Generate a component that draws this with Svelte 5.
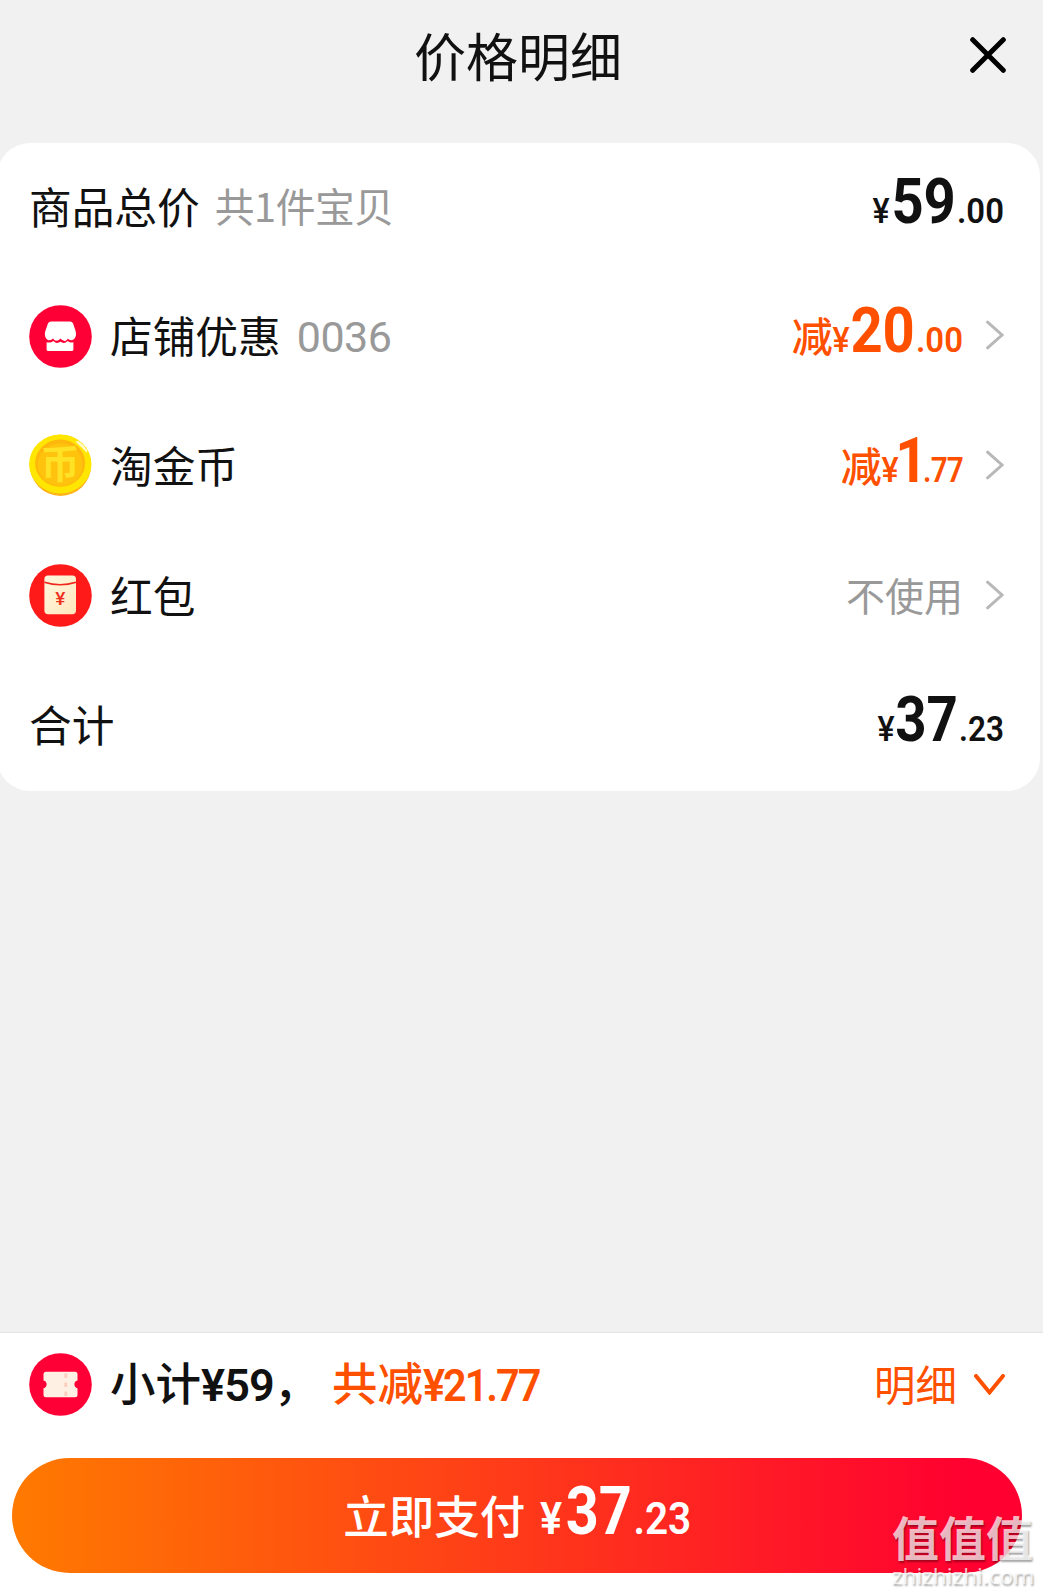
<script>
    const rows = [
        { id: 'total', label: '商品总价', note: '共1件宝贝', int: '59', dec: '.00' },
        { id: 'shop', icon: 'shop', label: '店铺优惠', note: '0036', minus: true, int: '20', dec: '.00', arrow: true },
        { id: 'coin', icon: 'coin', label: '淘金币', minus: true, int: '1', dec: '.77', arrow: true },
        { id: 'packet', icon: 'packet', label: '红包', text: '不使用', arrow: true },
        { id: 'sum', label: '合计', int: '37', dec: '.23' }
    ];
</script>

<div class="page">
    <header>
        <h1>价格明细</h1>
        <button class="close" aria-label="关闭">
            <svg width="36" height="36" viewBox="0 0 36 36">
                <path d="M2.7 2.7 L33.3 33.3 M33.3 2.7 L2.7 33.3" />
            </svg>
        </button>
    </header>

    <section class="card">
        {#each rows as row (row.id)}
            <div class="row {row.id}">
                {#if row.icon}
                    <svg class="icon" viewBox="0 0 63 63">
                        {#if row.icon === 'shop'}
                            <circle cx="31.5" cy="31.5" r="31.3" fill="#ff0036" />
                            <path fill="#fff" d="M22 16.4 H41 Q43 16.4 44 18.2 L46.6 26 Q48 32 44.5 34.5 Q41.5 36.3 38.8 33.8 Q37 37 34.5 35.4 Q32.5 35 31.5 33.6 Q29.5 36 27.5 35.6 Q25.5 36 24 33.6 Q21.5 36.3 18.5 34.8 Q14.8 32 16.2 26.5 L19 18.2 Q20 16.4 22 16.4 Z" />
                            <path fill="#fff" d="M17.6 37.2 Q21.5 38.4 24.4 36 Q27.5 39.4 31.5 36.8 Q35.5 39.4 38.6 36 Q41.5 38.4 44.4 37.2 V44.4 Q44.4 46 42.8 46 H19.2 Q17.6 46 17.6 44.4 Z" />
                        {:else if row.icon === 'coin'}
                            <circle cx="31.5" cy="31.3" r="30.6" fill="#ffb31a" />
                            <ellipse cx="31.3" cy="30" rx="31.2" ry="29.4" fill="#ffe600" />
                            <ellipse cx="31.1" cy="29.1" rx="25" ry="23.6" fill="#ffb70d" />
                            <ellipse cx="31.2" cy="30.6" rx="22.6" ry="21.4" fill="#ffc20d" />
                            <path d="M46.5 7.5 L57.5 18.5 L58.6 16.8 Q55 10.5 49.5 7 Z" fill="#fff9c8" />
                            <text class="coin-glyph" x="31.2" y="43.6">币</text>
                        {:else}
                            <circle cx="31.5" cy="31.5" r="31.3" fill="#ff1a1a" />
                            <defs>
                                <linearGradient id="paper" x1="0" y1="0" x2="1" y2="1">
                                    <stop offset="0" stop-color="#fff8df" />
                                    <stop offset="1" stop-color="#ffe7bd" />
                                </linearGradient>
                            </defs>
                            <rect x="15.4" y="11.6" width="31.6" height="38.6" rx="3.6" fill="url(#paper)" />
                            <path d="M15.4 18.2 Q31.2 23.2 47 18.2" fill="none" stroke="#f3261c" stroke-width="1.6" />
                            <text class="packet-glyph" x="31.2" y="41.3">¥</text>
                        {/if}
                    </svg>
                {/if}
                <span class="label">{row.label}</span>
                {#if row.note}<span class="note">{row.note}</span>{/if}
                <span class="value">
                    {#if row.text}
                        <span class="unused">{row.text}</span>
                    {:else}
                        <span class="price" class:off={row.minus}>
                            {#if row.minus}<span class="minus">减</span>{/if}<span class="yen">¥</span><span class="int">{row.int}</span><span class="dec">{row.dec}</span>
                        </span>
                    {/if}
                    {#if row.arrow}
                        <svg class="arrow" width="18" height="30" viewBox="0 0 18 30">
                            <path d="M1.6 2.2 L16 15 L1.6 27.8" />
                        </svg>
                    {/if}
                </span>
            </div>
        {/each}
    </section>

    <footer>
        <div class="summary">
            <svg class="icon" viewBox="0 0 63 63">
                <circle cx="31.5" cy="31.5" r="31.3" fill="#ff0036" />
                <path fill="#fff0e4" d="M17 18.7 H46 Q48.5 18.7 48.5 21.2 V27.4 A4 4 0 0 0 48.5 35.2 V41.8 Q48.5 44.3 46 44.3 H17 Q14.5 44.3 14.5 41.8 V35.2 A4 4 0 0 0 14.5 27.4 V21.2 Q14.5 18.7 17 18.7 Z" />
                <path d="M36.8 20.5 V43.5" stroke="#ffcdbd" stroke-width="2.8" stroke-dasharray="4.6 4.4" />
            </svg>
            <span class="sub">小计<span class="num">¥59</span>，</span>
            <span class="saved">共减<span class="num">¥21.77</span></span>
            <span class="detail">明细</span>
            <svg width="31" height="21" viewBox="0 0 31 21">
                <path d="M2 2 L15.5 18.4 L29 2" />
            </svg>
        </div>
        <button class="pay">
            <span class="pay-label">立即支付</span><span class="yen">¥</span><span class="int">37</span><span class="dec">.23</span>
        </button>
        <div class="watermark">
            <span class="mark">值值值</span>
            <span class="site">zhizhizhi.com</span>
        </div>
    </footer>
</div>

<style>
    :global(body) {
        margin: 0;
        background: #f1f1f1;
    }
    .page {
        width: 1043px;
        height: 1595px;
        display: flex;
        flex-direction: column;
        overflow: hidden;
        color: #111;
        font-family: 'Noto Sans CJK SC', sans-serif;
    }
    button {
        border: 0;
        padding: 0;
        background: none;
        font-family: inherit;
    }
    header {
        height: 143px;
        display: grid;
        grid-template-columns: 1fr auto 1fr;
        align-items: start;
    }
    h1 {
        grid-column: 2;
        margin: 18px 7px 0 0;
        font-size: 52px;
        line-height: 74px;
        font-weight: 400;
    }
    .close {
        justify-self: end;
        height: 36px;
        margin: 37px 37px 0 0;
    }
    .close path {
        stroke: #000;
        stroke-width: 5;
        stroke-linecap: round;
    }
    .card {
        width: 1043px;
        height: 648px;
        box-sizing: border-box;
        margin-left: -3px;
        border-radius: 33px;
        background: #fff;
        display: grid;
        grid-template-rows: repeat(5, 1fr);
    }
    .row {
        display: flex;
        align-items: center;
        padding: 0 36px 0 32px;
    }
    .icon {
        width: 63px;
        height: 63px;
        flex: none;
        margin-right: 18px;
    }
    .row .icon {
        margin-top: -2px;
    }
    .label {
        font-size: 42.7px;
        line-height: 60px;
        margin-top: -6px;
    }
    .note {
        margin: -6px 0 0 15px;
        font-size: 39.8px;
        line-height: 60px;
        letter-spacing: -0.5px;
        color: #999;
    }
    .shop .note {
        margin: 0 0 0 16px;
        font-family: Roboto, sans-serif;
        font-weight: 400;
        font-size: 43px;
    }
    .coin-glyph {
        font-size: 39px;
        font-weight: 700;
        text-anchor: middle;
        fill: #ffe126;
    }
    .packet-glyph {
        font-family: Roboto, sans-serif;
        font-size: 19px;
        font-weight: 500;
        text-anchor: middle;
        fill: #f0301f;
    }
    .value {
        margin-left: auto;
        display: flex;
        align-items: center;
    }
    .price {
        display: flex;
        align-items: baseline;
        margin-top: -12px;
    }
    .price.off {
        color: #ff5000;
    }
    .minus {
        font-size: 41px;
        line-height: 60px;
        font-weight: 500;
    }
    .yen,
    .int,
    .dec,
    .num {
        font-family: Roboto, sans-serif;
    }
    /* narrow digits, the margins take back the space left by the scale */
    .yen,
    .int,
    .dec {
        transform-origin: right;
    }
    .yen {
        font-size: 35px;
        font-weight: 500;
        margin-left: -1.6px;
        transform: scaleX(0.92);
    }
    .int {
        font-size: 63.5px;
        font-weight: 700;
        line-height: 74px;
        margin-left: -6.4px;
        transform: scaleX(0.885);
    }
    .shop .int {
        margin-left: -7.6px;
    }
    .coin .int {
        margin-left: -8px;
        margin-right: -4px;
    }
    .sum .int {
        margin-left: -9px;
        transform: scaleX(0.86);
    }
    .dec {
        font-size: 35px;
        font-weight: 600;
        margin-left: -2px;
        transform: scaleX(0.94);
    }
    .coin .dec {
        margin-left: -7px;
        letter-spacing: -1px;
        transform: scaleX(0.85);
    }
    .sum .dec {
        margin-left: -4px;
        transform: scaleX(0.9);
    }
    .unused {
        font-size: 39px;
        line-height: 60px;
        margin-top: -6px;
        color: #999;
    }
    .arrow {
        margin-left: 23px;
        margin-top: -4px;
    }
    .arrow path {
        fill: none;
        stroke: #b8b8b8;
        stroke-width: 3;
        stroke-linecap: round;
    }
    footer {
        position: relative;
        height: 262px;
        margin-top: auto;
        background: #fff;
        box-shadow: 0 -1px 1px #e6e6e6;
    }
    .summary {
        height: 103px;
        display: flex;
        align-items: center;
        padding: 0 38px 0 29px;
    }
    .sub,
    .saved {
        font-size: 45.5px;
        line-height: 60px;
        font-weight: 500;
        margin-top: -3px;
    }
    .sub {
        width: 222px;
        white-space: nowrap;
    }
    .num {
        font-size: 45px;
        font-weight: 600;
        letter-spacing: -0.9px;
    }
    .saved .num {
        display: inline-block;
        letter-spacing: -2.2px;
        transform: scaleX(0.92);
        transform-origin: left;
    }
    .saved,
    .detail {
        color: #ff5000;
    }
    .detail {
        margin: -3px 17px 0 auto;
        font-size: 41.5px;
        line-height: 60px;
    }
    .summary > svg:last-child path {
        fill: none;
        stroke: #ff5000;
        stroke-width: 4;
        stroke-linecap: round;
    }
    .pay {
        width: 1010px;
        height: 115px;
        margin: 22px 0 0 12px;
        border-radius: 58px;
        background: linear-gradient(90deg, #ff7a00, #ff0030 95%);
        color: #fff;
        display: flex;
        justify-content: center;
        align-items: baseline;
    }
    .pay-label {
        font-size: 45.5px;
        line-height: 60px;
        font-weight: 500;
        margin-right: 14px;
    }
    .pay .yen,
    .pay .dec {
        font-size: 45px;
        font-weight: 600;
    }
    .pay .dec {
        margin-left: -5.6px;
        transform: scaleX(0.9);
    }
    .pay .int {
        font-size: 67px;
        line-height: 107px;
        transform: scaleX(0.86);
    }
    .watermark {
        position: absolute;
        left: 892px;
        top: 174px;
        display: flex;
        flex-direction: column;
        color: rgba(255, 255, 255, 0.72);
        text-shadow: 1px 2px 2px rgba(0, 0, 0, 0.35);
    }
    .mark {
        font-size: 47px;
        line-height: 58px;
        font-weight: 700;
    }
    .site {
        font-family: 'Noto Sans', sans-serif;
        font-size: 22.5px;
        line-height: 22px;
    }
</style>
